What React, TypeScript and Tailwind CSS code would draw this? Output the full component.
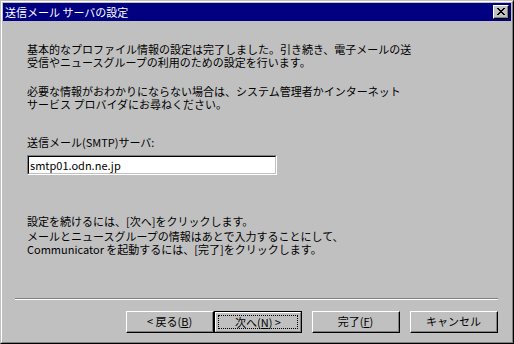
import type { ReactNode } from "react";

const font = { fontFamily: '"Noto Sans CJK JP", "Noto Sans", sans-serif' };

function CloseGlyph() {
  // classic 8x7 bitmap cross
  const rows = ["11000011", "01100110", "00111100", "00011000", "00111100", "01100110", "11000011"];
  return (
    <svg width="8" height="7" viewBox="0 0 8 7" shapeRendering="crispEdges">
      {rows.map((r, y) =>
        r.split("").map((c, x) => (c === "1" ? <rect key={`${x}-${y}`} x={x} y={y} width="1" height="1" fill="#000" /> : null))
      )}
    </svg>
  );
}

function WizardButton({ children, isDefault = false }: { children: ReactNode; isDefault?: boolean }) {
  if (isDefault) {
    return (
      <div className="w-[88px] h-[22px] border border-black">
        <div className="h-full border-t border-l border-white border-b border-r border-b-[#808080] border-r-[#808080] flex p-[2px]">
          <div className="flex-1 border border-dotted border-black flex items-center justify-center text-[11px] leading-none">
            {children}
          </div>
        </div>
      </div>
    );
  }
  return (
    <div className="w-[88px] h-[22px] border-t border-l border-white border-b border-r border-b-black border-r-black">
      <div className="h-full border-b border-r border-[#808080] flex items-center justify-center text-[11px] leading-none">
        {children}
      </div>
    </div>
  );
}

function Line({ children, className = "" }: { children: ReactNode; className?: string }) {
  return <div className={`pl-[24px] h-[13px] leading-[11px] pt-px whitespace-nowrap ${className}`}>{children}</div>;
}

export default function App() {
  return (
    <div className="w-[514px] h-[344px] bg-[#c0c0c0] text-black" style={font}>
      <div className="h-full border-t border-l border-[#c0c0c0] border-b border-r border-b-black border-r-black">
        <div className="h-full border-t border-l border-white border-b border-r border-b-[#808080] border-r-[#808080] p-px flex flex-col">
          {/* title bar */}
          <div className="h-[18px] bg-[#000080] flex items-center justify-between pl-[2px] pr-[2px]">
            <span className="text-white text-[11px] leading-none">送信メール サーバの設定</span>
            <div className="w-[16px] h-[14px] bg-[#c0c0c0] border-t border-l border-white border-b border-r border-b-black border-r-black">
              <div className="h-full border-b border-r border-[#808080] flex items-center justify-center">
                <CloseGlyph />
              </div>
            </div>
          </div>

          {/* body */}
          <div className="flex-1 flex flex-col text-[11px]">
            <Line className="mt-[22px]">基本的なプロファイル情報の設定は完了しました。引き続き、電子メールの送</Line>
            <Line>受信やニュースグループの利用のための設定を行います。</Line>

            <Line className="mt-[16px]">必要な情報がおわかりにならない場合は、システム管理者かインターネット</Line>
            <Line>サービス プロバイダにお尋ねください。</Line>

            <Line className="mt-[25px]">送信メール(SMTP)サーバ:</Line>
            <div className="pl-[24px] mt-[6px]">
              <div className="w-[250px] h-[20px] border-t border-l border-[#808080] border-b border-r border-b-white border-r-white">
                <div className="h-full bg-white border-t border-l border-black border-b border-r border-b-[#c0c0c0] border-r-[#c0c0c0] flex items-center pl-px leading-none">
                  smtp01.odn.ne.jp
                </div>
              </div>
            </div>

            <Line className="mt-[40px]">設定を続けるには、[次へ]をクリックします。</Line>
            <Line className="mt-[2px]">メールとニュースグループの情報はあとで入力することにして、</Line>
            <Line>Communicator を起動するには、[完了]をクリックします。</Line>

            <div className="mt-[42px] ml-[12px] mr-[13px] border-t border-[#808080] border-b border-b-white" />

            <div className="mt-[11px] pr-[13px] flex justify-end">
              <WizardButton>
                &lt;&nbsp;戻る(<span className="underline">B</span>)
              </WizardButton>
              <WizardButton isDefault>
                次へ(<span className="underline">N</span>)&nbsp;&gt;
              </WizardButton>
              <div className="w-[10px]" />
              <WizardButton>
                完了(<span className="underline">F</span>)
              </WizardButton>
              <div className="w-[10px]" />
              <WizardButton>キャンセル</WizardButton>
            </div>
          </div>
        </div>
      </div>
    </div>
  );
}
